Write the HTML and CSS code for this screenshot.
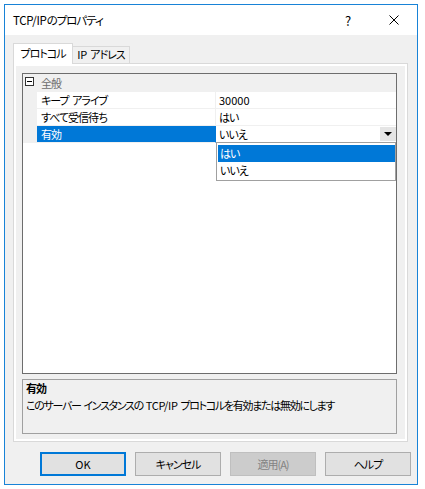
FILE: index.html
```html
<!DOCTYPE html>
<html lang="ja">
<head>
    <meta charset="UTF-8">
    <title>TCP/IPのプロパティ</title>
    <link rel="stylesheet" href="styles.css">
</head>
<body>
    <div class="window">
        <div class="titlebar">
            <span class="title"><span class="latin">TCP/IP</span>のプロパティ</span>
            <div class="caption-buttons">
                <span class="cap-btn">?</span>
                <span class="cap-btn">
                    <svg width="10" height="10" viewBox="0 0 10 10">
                        <path d="M0.5 0.5 L9.5 9.5 M9.5 0.5 L0.5 9.5" stroke="#000" stroke-width="1" fill="none"/>
                    </svg>
                </span>
            </div>
        </div>

        <div class="client">
            <div class="tabs">
                <div class="tab active">プロトコル</div>
                <div class="tab"><span class="latin">IP</span> アドレス</div>
            </div>

            <div class="tab-panel">
                <div class="page">
                    <!-- property grid -->
                    <div class="grid">
                        <div class="row category">
                            <span class="gutter"><span class="toggle"></span></span>
                            <span class="cat-name">全般</span>
                        </div>
                        <div class="row">
                            <span class="gutter"></span>
                            <span class="name">キープ アライブ</span>
                            <span class="value num">30000</span>
                        </div>
                        <div class="row">
                            <span class="gutter"></span>
                            <span class="name">すべて受信待ち</span>
                            <span class="value">はい</span>
                        </div>
                        <div class="row selected">
                            <span class="gutter"></span>
                            <span class="name">有効</span>
                            <span class="value">
                                いいえ
                                <span class="drop-btn"><span class="arrow"></span></span>
                            </span>
                        </div>

                        <ul class="droplist">
                            <li class="hot">はい</li>
                            <li>いいえ</li>
                        </ul>
                    </div>

                    <div class="desc">
                        <div class="desc-title">有効</div>
                        <div class="desc-text">このサーバー インスタンスの <span class="latin">TCP/IP</span> プロトコルを有効または無効にします</div>
                    </div>
                </div>
            </div>

            <div class="buttons">
                <button class="btn default num">OK</button>
                <button class="btn">キャンセル</button>
                <button class="btn" disabled>適用(A)</button>
                <button class="btn">ヘルプ</button>
            </div>
        </div>
    </div>
</body>
</html>
```

FILE: styles.css
```css
body {
  margin: 0;
  padding: 0;
  background: #fff;
  font-family: "Noto Sans CJK JP", "Noto Sans", sans-serif;
  font-size: 11px;
  font-feature-settings: "palt";
  letter-spacing: -1px;
  word-spacing: 2px;
  color: #000;
}

/* latin-only labels keep normal spacing */
.num {
  letter-spacing: 0;
}
.latin {
  letter-spacing: -0.3px;
}

.window {
  margin: 4px 0 0 4px;
  width: 414px;
  height: 481px;
  border: 1px solid #1883d7;
  box-sizing: border-box;
  display: flex;
  flex-direction: column;
}

/* Title bar */
.titlebar {
  height: 30px;
  background: #fff;
  display: flex;
  align-items: center;
  justify-content: space-between;
}
.title {
  padding-left: 8px;
  font-size: 11.5px;
}
.caption-buttons {
  display: flex;
  height: 100%;
}
.cap-btn {
  width: 46px;
  display: flex;
  align-items: center;
  justify-content: center;
  font-size: 13px;
  letter-spacing: 0;
}

/* Dialog body */
.client {
  flex: 1;
  background: #f0f0f0;
  padding: 8px 0 8px 8px;
}

.tabs {
  display: flex;
  align-items: flex-end;
  height: 20px;
}
.tab {
  box-sizing: border-box;
  height: 17px;
  line-height: 15px;
  width: 57px;
  text-align: center;
  white-space: nowrap;
  border: 1px solid #d9d9d9;
  border-bottom: none;
  background: #f0f0f0;
}
.tab.active {
  height: 21px;
  line-height: 19px;
  width: 60px;
  margin-bottom: -1px;
  background: #fff;
  position: relative;
  z-index: 1;
}
.tab + .tab {
  border-left: none;
}

.tab-panel {
  width: 395px;
  height: 379px;
  box-sizing: border-box;
  border: 1px solid #d9d9d9;
  background: #fff;
  padding: 2px;
}
.page {
  height: 100%;
  box-sizing: border-box;
  background: #f0f0f0;
  padding: 7px 8px 5px 6px;
  display: flex;
  flex-direction: column;
  gap: 5px;
}

/* Property grid */
.grid {
  position: relative;
  height: 301px;
  box-sizing: border-box;
  border: 1px solid #6d6d6d;
  background: #fff;
}
.row {
  display: flex;
  height: 17px;
  line-height: 16px;
  white-space: nowrap;
}
.row.category {
  height: 18px;
  line-height: 18px;
  background: #f0f0f0;
}
.gutter {
  width: 14px;
  flex: none;
  background: #f0f0f0;
  position: relative;
}
.toggle {
  position: absolute;
  left: 2px;
  top: 3px;
  width: 9px;
  height: 9px;
  box-sizing: border-box;
  border: 1px solid #333;
  background: #fff;
}
.toggle::after {
  content: "";
  position: absolute;
  left: 1px;
  top: 3px;
  width: 5px;
  height: 1px;
  background: #000;
}
.cat-name {
  padding-left: 4px;
  color: #6d6d6d;
}
.name {
  width: 179px;
  flex: none;
  box-sizing: border-box;
  padding-left: 4px;
  border-bottom: 1px solid #f0f0f0;
  border-right: 1px solid #f0f0f0;
}
.value {
  flex: 1;
  box-sizing: border-box;
  padding-left: 3px;
  border-bottom: 1px solid #f0f0f0;
  position: relative;
}
.row.selected .name {
  background: #0078d7;
  color: #fff;
  border-right-color: #0078d7;
}

.drop-btn {
  position: absolute;
  right: 0;
  top: 1px;
  width: 16px;
  height: 14px;
  background: #e5e5e5;
  display: flex;
  align-items: center;
  justify-content: center;
}
.arrow {
  width: 0;
  height: 0;
  border-left: 4px solid transparent;
  border-right: 4px solid transparent;
  border-top: 4px solid #000;
}

.droplist {
  position: absolute;
  left: 193px;
  top: 68px;
  width: 180px;
  margin: 0;
  padding: 2px 0 1px 1px;
  list-style: none;
  box-sizing: border-box;
  border: 1px solid #a0a0a0;
  background: #fff;
}
.droplist li {
  height: 17px;
  line-height: 17px;
  padding-left: 2px;
}
.droplist li.hot {
  background: #0078d7;
  color: #fff;
}

/* Description pane */
.desc {
  height: 55px;
  box-sizing: border-box;
  border: 1px solid #a0a0a0;
  background: #f0f0f0;
  padding: 0 3px;
  line-height: 17px;
  white-space: nowrap;
}
.desc-title {
  font-weight: bold;
}
.desc-text {
  letter-spacing: -1.3px;
  word-spacing: 1.5px;
}

/* Dialog buttons */
.buttons {
  display: flex;
  justify-content: flex-end;
  gap: 9px;
  margin-top: 10px;
  padding-right: 6px;
}
.btn {
  width: 86px;
  height: 24px;
  box-sizing: border-box;
  border: 1px solid #adadad;
  background: #e1e1e1;
  font: inherit;
  letter-spacing: -1px;
  color: #000;
  padding: 0;
}
.btn.default {
  border: 2px solid #0078d7;
  letter-spacing: 0;
}
.btn:disabled {
  background: #cccccc;
  border-color: #bfbfbf;
  color: #838383;
}
```
